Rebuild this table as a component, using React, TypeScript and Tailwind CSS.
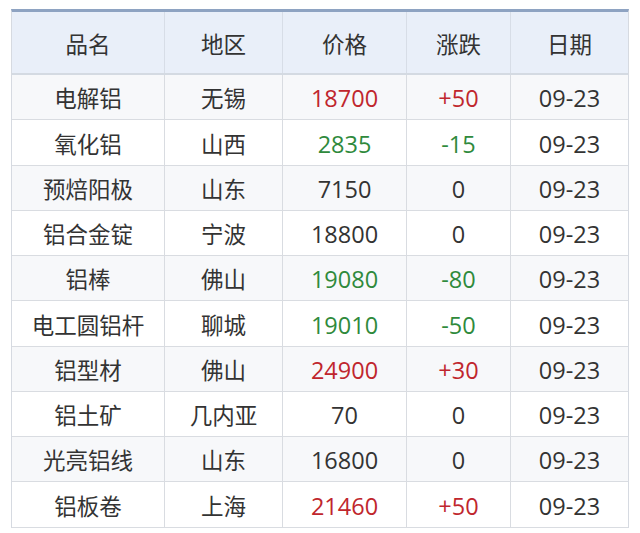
import React from "react";

type Row = { name: string; region: string; price: string; change: string; date: string; tone: "up" | "down" | "flat"; h: string };

const rows: Row[] = [
  { name: "电解铝", region: "无锡", price: "18700", change: "+50", date: "09-23", tone: "up", h: "h-[45px]" },
  { name: "氧化铝", region: "山西", price: "2835", change: "-15", date: "09-23", tone: "down", h: "h-[46px]" },
  { name: "预焙阳极", region: "山东", price: "7150", change: "0", date: "09-23", tone: "flat", h: "h-[45px]" },
  { name: "铝合金锭", region: "宁波", price: "18800", change: "0", date: "09-23", tone: "flat", h: "h-[45px]" },
  { name: "铝棒", region: "佛山", price: "19080", change: "-80", date: "09-23", tone: "down", h: "h-[45px]" },
  { name: "电工圆铝杆", region: "聊城", price: "19010", change: "-50", date: "09-23", tone: "down", h: "h-[46px]" },
  { name: "铝型材", region: "佛山", price: "24900", change: "+30", date: "09-23", tone: "up", h: "h-[45px]" },
  { name: "铝土矿", region: "几内亚", price: "70", change: "0", date: "09-23", tone: "flat", h: "h-[45px]" },
  { name: "光亮铝线", region: "山东", price: "16800", change: "0", date: "09-23", tone: "flat", h: "h-[45px]" },
  { name: "铝板卷", region: "上海", price: "21460", change: "+50", date: "09-23", tone: "up", h: "h-[46px]" },
];

const toneClass = (t: Row["tone"]) =>
  t === "up" ? "text-[#c0262d]" : t === "down" ? "text-[#2f8a3c]" : "text-[#333333]";

export default function App() {
  return (
    <div className="w-[640px] h-[533px] bg-white overflow-hidden pt-[9px] pl-[11px]" style={{ fontFamily: '"Open Sans", "Noto Sans CJK SC", sans-serif' }}>
      <div className="w-[618px] border-t-[3px] border-t-[#8ea3c2] border-l border-r border-[#d6dae1] text-[22.5px] text-[#333333]">
        <div className="grid grid-cols-[153px_118px_124px_104px_117px] h-[63px] bg-[#e9eff9] border-b-2 border-b-[#d4dae2]">
          {["品名", "地区", "价格", "涨跌", "日期"].map((t, i) => (
            <div key={t} className={`flex items-center justify-center pt-[5px] ${i < 4 ? "border-r border-[#d7dde7]" : ""}`}>
              {t}
            </div>
          ))}
        </div>
        {rows.map((r, idx) => (
          <div
            key={r.name}
            className={`grid grid-cols-[153px_118px_124px_104px_117px] ${r.h} border-b border-[#d9dce1] ${idx % 2 === 0 ? "bg-[#f7f8fa]" : "bg-white"}`}
          >
            <div className="flex items-center justify-center pt-[4px] border-r border-[#d9dce1]">{r.name}</div>
            <div className="flex items-center justify-center pt-[4px] border-r border-[#d9dce1]">{r.region}</div>
            <div className={`flex items-center justify-center pt-[4px] border-r border-[#d9dce1] text-[23.5px] ${toneClass(r.tone)}`}>{r.price}</div>
            <div className={`flex items-center justify-center pt-[4px] border-r border-[#d9dce1] text-[23.5px] ${toneClass(r.tone)}`}>{r.change}</div>
            <div className="flex items-center justify-center pt-[4px] text-[23.5px]">{r.date}</div>
          </div>
        ))}
      </div>
    </div>
  );
}
